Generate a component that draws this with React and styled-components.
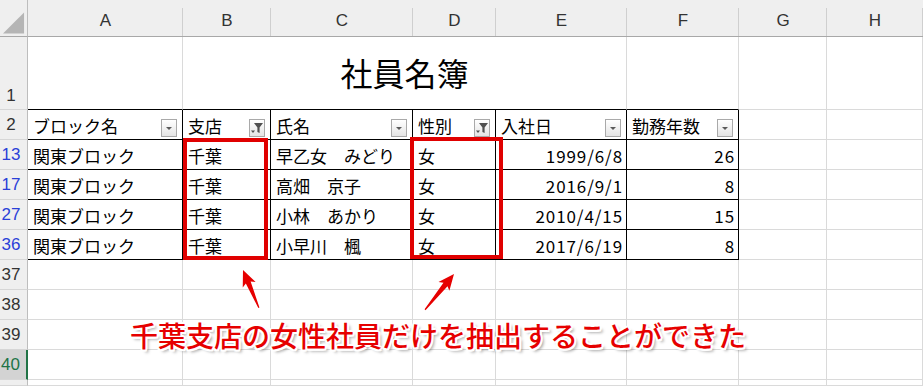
import React from "react";
import styled, { createGlobalStyle, css } from "styled-components";

const Global = createGlobalStyle`
  html, body { margin: 0; padding: 0; background: #fff; }
  body { width: 923px; height: 386px; overflow: hidden; font-family: "Noto Sans CJK JP", "Noto Sans", sans-serif; }
`;

const Sheet = styled.div`
  position: relative;
  width: 923px;
  height: 386px;
  overflow: hidden;
  display: grid;
  grid-template-columns: 28px 155px 88px 142px 83px 131px 112px 88px 1fr;
  grid-template-rows: 37px 73px repeat(9, 30px) 1fr;
  font-family: "Noto Sans CJK JP", "Noto Sans", sans-serif;
  color: #000;
`;

const Corner = styled.div`
  background: #efefef;
  border-right: 1px solid #bdbdbd;
  border-bottom: 1px solid #a8a8a8;
  box-sizing: border-box;
  display: flex;
  align-items: flex-end;
  padding: 0 2px 2px 3px;
`;

const ColHead = styled.div`
  box-sizing: border-box;
  background: linear-gradient(#cfcfcf, #cfcfcf) right bottom / 1px calc(100% - 8px) no-repeat, #efefef;
  border-bottom: 1px solid #a8a8a8;
  display: flex;
  align-items: center;
  justify-content: center;
  padding-top: 6px;
  font-family: "Liberation Sans", "Noto Sans", sans-serif;
  font-size: 17px;
  color: #333;
`;

const RowHead = styled.div`
  box-sizing: border-box;
  background: #efefef;
  border-right: 1px solid #bdbdbd;
  border-bottom: 1px solid #d6d6d6;
  display: flex;
  align-items: ${(p) => (p.$bottom ? "flex-end" : "center")};
  justify-content: center;
  padding-right: 5px;
  padding-bottom: ${(p) => (p.$bottom ? "3px" : "0")};
  font-family: "Liberation Sans", "Noto Sans", sans-serif;
  font-size: 17px;
  color: ${(p) => (p.$filtered ? "#2a3fd8" : "#333")};
  ${(p) =>
    p.$selected &&
    css`
      background: #d3d3d3;
      color: #217346;
      border-right: 2px solid #217346;
    `}
`;

const Cell = styled.div`
  box-sizing: border-box;
  position: relative;
  border-right: 1px solid ${(p) => (p.$table ? "#000" : "#dadada")};
  border-bottom: 1px solid ${(p) => (p.$table || p.$above ? "#000" : "#dadada")};
  display: flex;
  align-items: center;
  justify-content: ${(p) => (p.$right ? "flex-end" : "flex-start")};
  padding: 1px 4px 0 5px;
  font-size: 17px;
  white-space: pre;
  overflow: hidden;
  grid-column: ${(p) => (p.$span ? `span ${p.$span}` : "auto")};
  ${(p) =>
    p.$num &&
    css`
      letter-spacing: 0.9px;
      padding-right: 3px;
    `}
`;

const Title = styled(Cell)`
  justify-content: center;
  font-size: 32px;
  padding: 0 0 3px 0;
`;

const FilterBtn = styled.div`
  position: absolute;
  right: 5px;
  bottom: 2px;
  width: 16px;
  height: 18px;
  box-sizing: border-box;
  border: 1px solid #a9a9a9;
  background: linear-gradient(#ffffff, #e4e4e4);
  display: flex;
  align-items: center;
  justify-content: center;
`;

const Overlay = styled.svg`
  position: absolute;
  left: 0;
  top: 0;
  pointer-events: none;
`;

const Caption = styled.div`
  position: absolute;
  left: 130px;
  top: 318px;
  font-family: "Noto Sans CJK JP", sans-serif;
  font-weight: 500;
  font-size: 28px;
  line-height: 34px;
  color: #e60000;
  white-space: nowrap;
  text-shadow: 2px 0 0 #fff, -2px 0 0 #fff, 0 2px 0 #fff, 0 -2px 0 #fff,
    1.5px 1.5px 0 #fff, -1.5px 1.5px 0 #fff, 1.5px -1.5px 0 #fff, -1.5px -1.5px 0 #fff,
    3px 3px 3px rgba(0, 0, 0, 0.35);
`;

const DropIcon = () => (
  <svg width="8" height="5" viewBox="0 0 8 5">
    <path d="M1 1 H7 L4 4 Z" fill="#5a5a5a" />
  </svg>
);

const FunnelIcon = () => (
  <svg width="14" height="14" viewBox="0 0 14 14">
    <path d="M4 2 H13 L9.6 6.5 V12 L7.4 11 V6.5 Z" fill="#505050" />
    <path d="M1 9.5 H5 L3 12 Z" fill="#505050" />
  </svg>
);

const Arrow = ({ x, y, angle, len }) => (
  <g transform={`translate(${x} ${y}) rotate(${angle})`}>
    <path
      d={`M0 0 L7 16 L2.6 13.5 L0.6 ${len} L-0.6 ${len} L-2.6 13.5 L-7 16 Z`}
      fill="#e60000"
    />
  </g>
);

const colLetters = ["A", "B", "C", "D", "E", "F", "G", "H"];
const headers = [
  { t: "ブロック名" },
  { t: "支店", f: true },
  { t: "氏名" },
  { t: "性別", f: true },
  { t: "入社日" },
  { t: "勤務年数" },
];
const rows = [
  { n: 13, d: ["関東ブロック", "千葉", "早乙女　みどり", "女", "1999/6/8", "26"] },
  { n: 17, d: ["関東ブロック", "千葉", "高畑　京子", "女", "2016/9/1", "8"] },
  { n: 27, d: ["関東ブロック", "千葉", "小林　あかり", "女", "2010/4/15", "15"] },
  { n: 36, d: ["関東ブロック", "千葉", "小早川　楓", "女", "2017/6/19", "8"] },
];

export default function App() {
  return (
    <>
      <Global />
      <Sheet>
        <Corner>
          <svg width="23" height="23" viewBox="0 0 23 23">
            <path d="M0 23 L22 1 V23 Z" fill="#b5b5b5" />
          </svg>
        </Corner>
        {colLetters.map((c) => (
          <ColHead key={c}>{c}</ColHead>
        ))}

        <RowHead $bottom>1</RowHead>
        <Cell $above />
        <Title $above $span={4}>社員名簿</Title>
        <Cell $above />
        <Cell />
        <Cell />

        <RowHead>2</RowHead>
        {headers.map((h) => (
          <Cell key={h.t} $table>
            {h.t}
            <FilterBtn>{h.f ? <FunnelIcon /> : <DropIcon />}</FilterBtn>
          </Cell>
        ))}
        <Cell />
        <Cell />

        {rows.map((r) => (
          <React.Fragment key={r.n}>
            <RowHead $filtered>{r.n}</RowHead>
            {r.d.map((v, i) => (
              <Cell key={i} $table $right={i >= 4} $num={i >= 4}>
                {v}
              </Cell>
            ))}
            <Cell />
            <Cell />
          </React.Fragment>
        ))}

        {[37, 38, 39, 40, 41].map((n) => (
          <React.Fragment key={n}>
            <RowHead $selected={n === 40}>{n === 41 ? "" : n}</RowHead>
            {colLetters.map((c) => (
              <Cell key={c} />
            ))}
          </React.Fragment>
        ))}

        <Overlay width="923" height="386" viewBox="0 0 923 386">
          <rect x="185" y="140" width="81" height="118" fill="none" stroke="#e00000" strokeWidth="4" />
          <rect x="412" y="139" width="89" height="118" fill="none" stroke="#e00000" strokeWidth="4" />
          <Arrow x={243} y={270} angle={-22.8} len={41} />
          <Arrow x={454} y={274} angle={39} len={46} />
        </Overlay>
        <Caption>千葉支店の女性社員だけを抽出することができた</Caption>
      </Sheet>
    </>
  );
}
